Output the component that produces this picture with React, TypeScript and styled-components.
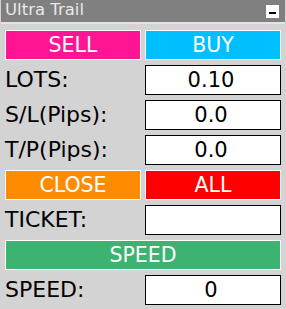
import React from 'react';
import styled, { createGlobalStyle } from 'styled-components';

const GlobalStyle = createGlobalStyle`
  html, body {
    margin: 0;
    padding: 0;
    background: #d3d3d3;
  }
  * {
    box-sizing: border-box;
  }
`;

const Panel = styled.div`
  width: 286px;
  height: 309px;
  background: #d3d3d3;
  font-family: 'DejaVu Sans', Verdana, sans-serif;
  overflow: hidden;
`;

const TitleBar = styled.div`
  height: 24px;
  margin: 0 1px;
  background: #808080;
  display: flex;
  align-items: center;
  justify-content: space-between;
  padding: 0 6px 1px 4px;
  border-bottom: 2px solid #e4e4e4;
`;

const Title = styled.span`
  color: #e8e8e8;
  font-size: 16.5px;
  line-height: 1;
`;

const MinButton = styled.div`
  width: 13px;
  height: 13px;
  background: #fff;
  display: flex;
  align-items: center;
  justify-content: center;
  margin-top: 2px;

  &::after {
    content: '';
    width: 7px;
    height: 2px;
    margin-top: 2px;
    margin-left: -1px;
    background: #000;
  }
`;

const Body = styled.div`
  display: grid;
  grid-template-columns: 136px 136px;
  grid-auto-rows: 30px;
  column-gap: 4px;
  row-gap: 5px;
  padding: 6px 5px 0 5px;
`;

const ColorButton = styled.div<{ $bg: string; $wide?: boolean }>`
  grid-column: ${(p) => (p.$wide ? '1 / 3' : 'auto')};
  background: ${(p) => p.$bg};
  border: 1px solid #fff;
  color: #fff;
  font-size: 20.5px;
  display: flex;
  align-items: center;
  justify-content: center;
  padding-bottom: 1px;
`;

const Label = styled.div`
  color: #000;
  font-size: 22px;
  display: flex;
  align-items: center;
  padding-bottom: 1px;
`;

const Field = styled.div`
  background: #fff;
  border: 1px solid #000;
  color: #000;
  font-size: 21px;
  display: flex;
  align-items: center;
  justify-content: center;
  padding: 0 4px 1px 0;
`;

const rows: { label: string; value: string }[] = [
  { label: 'LOTS:', value: '0.10' },
  { label: 'S/L(Pips):', value: '0.0' },
  { label: 'T/P(Pips):', value: '0.0' },
];

const App: React.FC = () => {
  return (
    <Panel>
      <GlobalStyle />
      <TitleBar>
        <Title>Ultra Trail</Title>
        <MinButton />
      </TitleBar>
      <Body>
        <ColorButton $bg="#ff1493">SELL</ColorButton>
        <ColorButton $bg="#00bfff">BUY</ColorButton>
        {rows.map((row) => (
          <React.Fragment key={row.label}>
            <Label>{row.label}</Label>
            <Field>{row.value}</Field>
          </React.Fragment>
        ))}
        <ColorButton $bg="#ff8c00">CLOSE</ColorButton>
        <ColorButton $bg="#ff0000">ALL</ColorButton>
        <Label>TICKET:</Label>
        <Field />
        <ColorButton $bg="#3cb371" $wide>
          SPEED
        </ColorButton>
        <Label>SPEED:</Label>
        <Field>0</Field>
      </Body>
    </Panel>
  );
};

export default App;
